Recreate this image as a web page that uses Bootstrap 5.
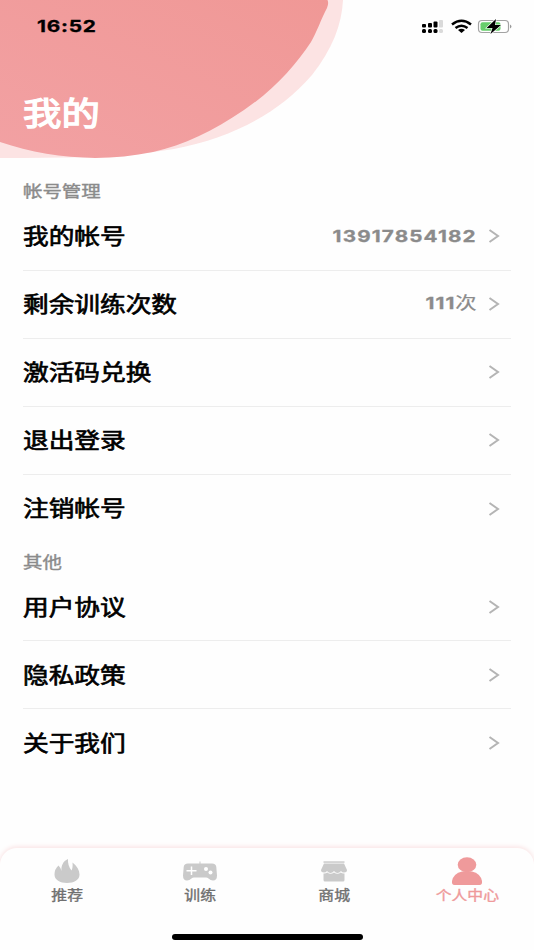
<!DOCTYPE html>
<html lang="zh-CN">
<head>
<meta charset="utf-8">
<meta name="viewport" content="width=device-width, initial-scale=1">
<title>我的</title>
<link href="https://cdn.jsdelivr.net/npm/bootstrap@5.3.0/dist/css/bootstrap.min.css" rel="stylesheet">
<style>
body{font-family:"Noto Sans CJK SC",sans-serif;background:#fefefe;color:#000}
.screen{height:950px;width:534px;overflow:hidden}
.hero{height:172px;flex:none}
.hero-art{left:0;top:0;z-index:0}
.statusbar{height:52px;padding-left:37px;padding-right:21px}
.wide{display:inline-block;transform:scaleX(1.2);transform-origin:left center;white-space:nowrap;line-height:1}
.wide-end{transform-origin:right center}
.wide-mid{transform-origin:center}
.clock{font:700 16px/1 Inter,sans-serif;transform:scaleX(1.3);letter-spacing:.6px;-webkit-text-stroke:.3px #000}
.page-title{font-size:32px;font-weight:400;color:#fff;-webkit-text-stroke:1.3px #fff;margin:43px 0 0 23px}
.section-label{font-size:16.2px;color:#8b8b8b;-webkit-text-stroke:.4px #8b8b8b;height:31px;padding:6px 0 0 23px;flex:none}
.section-next{height:31px;padding-top:7px}
.menu-row{height:67.9px;margin:0 23px;padding:0 11px 0 0;background:transparent;color:#000;border:0;border-bottom:1.5px solid #ededed;border-radius:0}
.menu-row:last-child{border-bottom-color:transparent}
.menu-row .wide{font-size:21.4px;-webkit-text-stroke:.65px #000;margin-top:-3px}
.menu-row .row-value{font:700 16px/1 Inter,"Noto Sans CJK SC",sans-serif;color:#8b8b8b;-webkit-text-stroke:.3px #8b8b8b;letter-spacing:.9px;margin:0 11.5px 0 0;transform:scaleX(1.29)}
.menu-row .row-count{letter-spacing:.8px;margin:-4px 11px 0 0}
.row-value .unit{font:400 16.5px/1 "Noto Sans CJK SC",sans-serif;letter-spacing:0;-webkit-text-stroke:.2px #8b8b8b}
.tabs{height:102px;margin-top:auto;border-radius:17px 17px 0 0;background:#fefefe;box-shadow:0 -1px 5px #f9dfe0}
.tab{height:58px;padding-top:9px;color:#cacaca}
.tab .wide{font-size:13.2px;color:#707070;-webkit-text-stroke:.35px #707070}
.tab.on{color:#ef9a9b}
.tab.on .wide{color:#ef9a9b;-webkit-text-stroke-color:#ef9a9b}
.home-line{width:191px;height:6px;background:#000;border-radius:3px;margin-top:28px}
</style>
</head>
<body>
<main class="screen d-flex flex-column position-relative">
<header class="hero position-relative">
  <svg class="hero-art position-absolute" width="360" height="172" viewBox="0 0 360 172">
    <defs><linearGradient id="rose" x1="0" y1="1" x2="1" y2="0"><stop stop-color="#f2a1a3"/><stop offset="1" stop-color="#f09896"/></linearGradient></defs>
    <path d="M0 0H343C342 24 332 50 312 75C280 112 235 137 174 149C120 158 60 158 0 158Z" fill="#fce3e3"/>
    <path d="M0 0H327.500Q329 3 327 8C322 17 316 34 311 42C295 66 275 89 244 110C213 131 184 145 153 152C100 163 47 158 0 142Z" fill="url(#rose)"/>
  </svg>
  <div class="statusbar d-flex justify-content-between align-items-center position-relative">
    <span class="wide clock">16:52</span>
    <svg width="92" height="18" viewBox="421 17 92 18">
      <g fill="#000"><rect x="422" y="29" width="4" height="4" rx="1.500"/><rect x="428" y="29" width="4" height="4" rx="1.500"/><rect x="433.500" y="29" width="4" height="4" rx="1.500"/><rect x="422" y="24" width="4" height="3.500" rx="1"/><rect x="428" y="23" width="4" height="4.500" rx="1"/><rect x="433.500" y="21.500" width="4" height="6" rx="1"/></g>
      <g fill="#dadada"><rect x="439" y="29" width="4" height="4" rx="1.500"/><rect x="439" y="20" width="4" height="7.500" rx="1"/></g>
      <g fill="none" stroke="#000" stroke-width="2.500"><path d="M452 24.500Q461.500 17 471 24.500"/><path d="M455.500 28Q461.500 23.500 467.500 28"/></g><path d="M458 30Q461.500 27.500 465 30L461.500 33Z"/>
      <rect x="478.500" y="20.500" width="30" height="12" rx="3.500" fill="#fff" stroke="#a3a3a3" stroke-width="1.200"/><rect x="480.500" y="22.300" width="20" height="8.500" rx="2" fill="#67ce6c"/><path d="M510 24.500Q513 26.500 510 28.500Z" fill="#999"/>
      <path d="M496 19L486.500 28H492.500L490.500 34L501 25H495Z" stroke="#fff" stroke-width="1.200" paint-order="stroke"/>
    </svg>
  </div>
  <h1 class="wide page-title position-relative">我的</h1>
</header>
<div class="section-label d-flex align-items-center"><span class="wide">帐号管理</span></div>
<section class="list-group list-group-flush">
  <a class="list-group-item menu-row d-flex align-items-center"><span class="wide me-auto">我的帐号</span><span class="wide wide-end row-value">13917854182</span><svg width="12" height="16" viewBox="0 0 12 16"><path d="M1.500 2L10 8L1.500 14" fill="none" stroke="#b4b4b4" stroke-width="2"/></svg></a>
  <a class="list-group-item menu-row d-flex align-items-center"><span class="wide me-auto">剩余训练次数</span><span class="wide wide-end row-value row-count">111<span class="unit">次</span></span><svg width="12" height="16" viewBox="0 0 12 16"><path d="M1.500 2L10 8L1.500 14" fill="none" stroke="#b4b4b4" stroke-width="2"/></svg></a>
  <a class="list-group-item menu-row d-flex align-items-center"><span class="wide me-auto">激活码兑换</span><svg width="12" height="16" viewBox="0 0 12 16"><path d="M1.500 2L10 8L1.500 14" fill="none" stroke="#b4b4b4" stroke-width="2"/></svg></a>
  <a class="list-group-item menu-row d-flex align-items-center"><span class="wide me-auto">退出登录</span><svg width="12" height="16" viewBox="0 0 12 16"><path d="M1.500 2L10 8L1.500 14" fill="none" stroke="#b4b4b4" stroke-width="2"/></svg></a>
  <a class="list-group-item menu-row d-flex align-items-center"><span class="wide me-auto">注销帐号</span><svg width="12" height="16" viewBox="0 0 12 16"><path d="M1.500 2L10 8L1.500 14" fill="none" stroke="#b4b4b4" stroke-width="2"/></svg></a>
</section>
<div class="section-label section-next d-flex align-items-center"><span class="wide">其他</span></div>
<section class="list-group list-group-flush">
  <a class="list-group-item menu-row d-flex align-items-center"><span class="wide me-auto">用户协议</span><svg width="12" height="16" viewBox="0 0 12 16"><path d="M1.500 2L10 8L1.500 14" fill="none" stroke="#b4b4b4" stroke-width="2"/></svg></a>
  <a class="list-group-item menu-row d-flex align-items-center"><span class="wide me-auto">隐私政策</span><svg width="12" height="16" viewBox="0 0 12 16"><path d="M1.500 2L10 8L1.500 14" fill="none" stroke="#b4b4b4" stroke-width="2"/></svg></a>
  <a class="list-group-item menu-row d-flex align-items-center"><span class="wide me-auto">关于我们</span><svg width="12" height="16" viewBox="0 0 12 16"><path d="M1.500 2L10 8L1.500 14" fill="none" stroke="#b4b4b4" stroke-width="2"/></svg></a>
</section>
<nav class="tabs">
  <div class="row g-0 text-center">
    <div class="col tab d-flex flex-column align-items-center">
      <svg width="36" height="31" viewBox="0 0 36 31"><path d="M9.500 8.500Q12 11 12.500 14C12 9 14 4 19 2Q18.500 8.500 22.500 13.500Q24 11 23.500 5.500C28 9 30.500 13 30.500 17.500C30.500 23 25 26 18 26S5.500 23 5.500 17.500Q5.500 12 9.500 8.500Z" fill="currentColor"/></svg><span class="wide wide-mid">推荐</span></div>
    <div class="col tab d-flex flex-column align-items-center">
      <svg width="36" height="31" viewBox="0 0 36 31"><path d="M18 4.500V7" stroke="currentColor" stroke-width="1"/><path d="M6 6.500H30Q34 6.500 34.300 10L35 18.500Q35 23.500 31 23.500Q28.500 23.500 26.500 21.500Q25.500 20.500 24 20.500H12Q10.500 20.500 9.500 21.500Q7.500 23.500 5 23.500Q1 23.500 1 18.500L1.700 10Q2 6.500 6 6.500Z" fill="currentColor"/><path d="M9.500 9.500V18M4.500 13.700H14.500" stroke="#fff" stroke-width="1.500"/><circle cx="24" cy="12" r="2" fill="#fff"/><circle cx="28.500" cy="15.500" r="2" fill="#fff"/></svg><span class="wide wide-mid">训练</span></div>
    <div class="col tab d-flex flex-column align-items-center">
      <svg width="36" height="31" viewBox="0 0 36 31"><g fill="currentColor"><rect x="7.500" y="4.300" width="21" height="1.500"/><path d="M8 6.500H28L31 13Q31 15.500 28 15.500Q26 15.500 25 14Q23.500 16 21.500 16Q19.500 16 18 14Q16.500 16 14.500 16Q12.500 16 11 14Q10 15.500 8 15.500Q5 15.500 5 13Z"/><path d="M7.500 16.500Q10 16.700 11.200 15.500Q14.500 18 18 15.500Q21.500 18 24.800 15.500Q26 16.700 28.500 16.500V23Q28.500 24.500 27 24.500H9Q7.500 24.500 7.500 23Z"/></g></svg><span class="wide wide-mid">商城</span></div>
    <div class="col tab on d-flex flex-column align-items-center">
      <svg width="36" height="31" viewBox="0 0 36 31"><g fill="currentColor"><ellipse cx="18" cy="7.800" rx="9.300" ry="7.500"/><path d="M5.500 28Q2.500 28 3 24Q4.500 16.500 13 14.500H23Q31.500 16.500 33 24Q33.500 28 30.500 28Z"/></g></svg><span class="wide wide-mid">个人中心</span></div>
  </div>
  <div class="home-line mx-auto"></div>
</nav>
</main>
<script src="https://cdn.jsdelivr.net/npm/bootstrap@5.3.0/dist/js/bootstrap.bundle.min.js"></script>
</body>
</html>
